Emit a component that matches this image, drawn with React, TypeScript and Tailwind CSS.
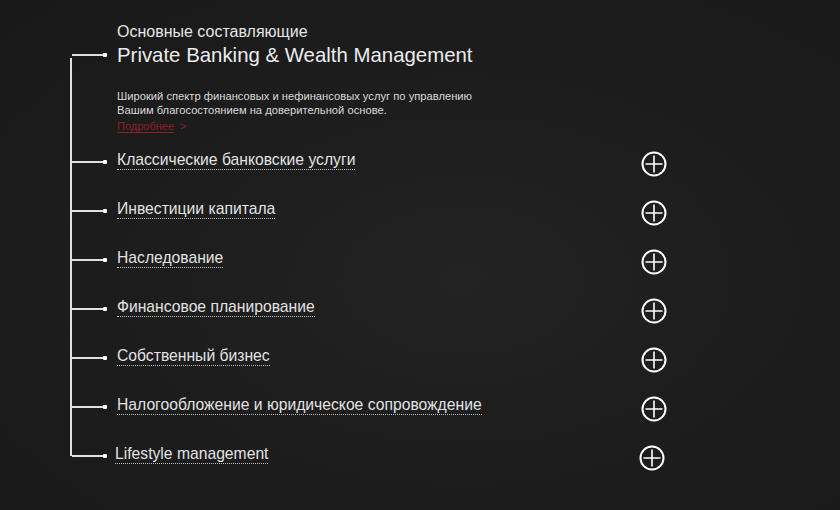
import React from "react";

const items = [
  "Классические банковские услуги",
  "Инвестиции капитала",
  "Наследование",
  "Финансовое планирование",
  "Собственный бизнес",
  "Налогообложение и юридическое сопровождение",
  "Lifestyle management",
];

function Branch() {
  return (
    <div className="flex items-center">
      <div className="h-[2px] w-[31px] bg-[#e0e0e0]" />
      <div className="h-[4px] w-[4px] rounded-[1px] bg-white" />
    </div>
  );
}

function PlusIcon() {
  return (
    <svg width="26" height="26" viewBox="0 0 26 26" fill="none">
      <circle cx="13" cy="13" r="11.5" stroke="white" strokeWidth="2" />
      <path d="M13 4.5v17M4.5 13h17" stroke="white" strokeWidth="1.6" />
    </svg>
  );
}

export default function App() {
  return (
    <div className="h-[510px] w-full overflow-hidden bg-[#1c1c1c] bg-[radial-gradient(ellipse_at_55%_55%,#232323_0%,#1d1d1d_45%,#191919_100%)] font-['Liberation_Sans',Arial,sans-serif] text-[#e2e2e2]">
      <div className="flex pl-[70px] pt-[23px]">
        {/* vertical tree line */}
        <div className="mt-[35px] h-[398px] w-[2px] shrink-0 bg-[#e0e0e0]" />

        <div className="flex w-[596px] flex-col">
          <div className="pl-[45px] text-[16px] leading-[18px] text-[#e6e6e6]">
            Основные составляющие
          </div>
          <div className="mt-[1px] flex items-center">
            <Branch />
            <span className="ml-[10px] text-[20.4px] leading-[26px] text-[#ececec]">
              Private Banking &amp; Wealth Management
            </span>
          </div>

          <div className="mt-[21px] pl-[45px] text-[11.2px] leading-[14px] text-[#dadada]">
            <p>Широкий спектр финансовых и нефинансовых услуг по управлению</p>
            <p>Вашим благосостоянием на доверительной основе.</p>
            <p className="mt-[2px] text-[11px] leading-[14px] text-[#8e1c2c]">
              <a className="underline underline-offset-2">Подробнее</a>
              <span className="ml-[6px]">&gt;</span>
            </p>
          </div>

          <div className="mt-[15px] flex flex-col">
            {items.map((label, i) => {
              const last = i === items.length - 1;
              return (
                <div key={label} className="flex h-[49px] items-start">
                  <div className="mt-[12px]">
                    <Branch />
                  </div>
                  <span
                    className={`${last ? "ml-[8px]" : "ml-[10px]"} mt-[2px] border-b border-dotted border-[#bdbdbd] text-[15.7px] leading-[19px] text-[#e2e2e2]`}
                  >
                    {label}
                  </span>
                  <div className={`ml-auto ${last ? "mr-[3px]" : "mr-[1px]"} mt-[3px]`}>
                    <PlusIcon />
                  </div>
                </div>
              );
            })}
          </div>
        </div>
      </div>
    </div>
  );
}
